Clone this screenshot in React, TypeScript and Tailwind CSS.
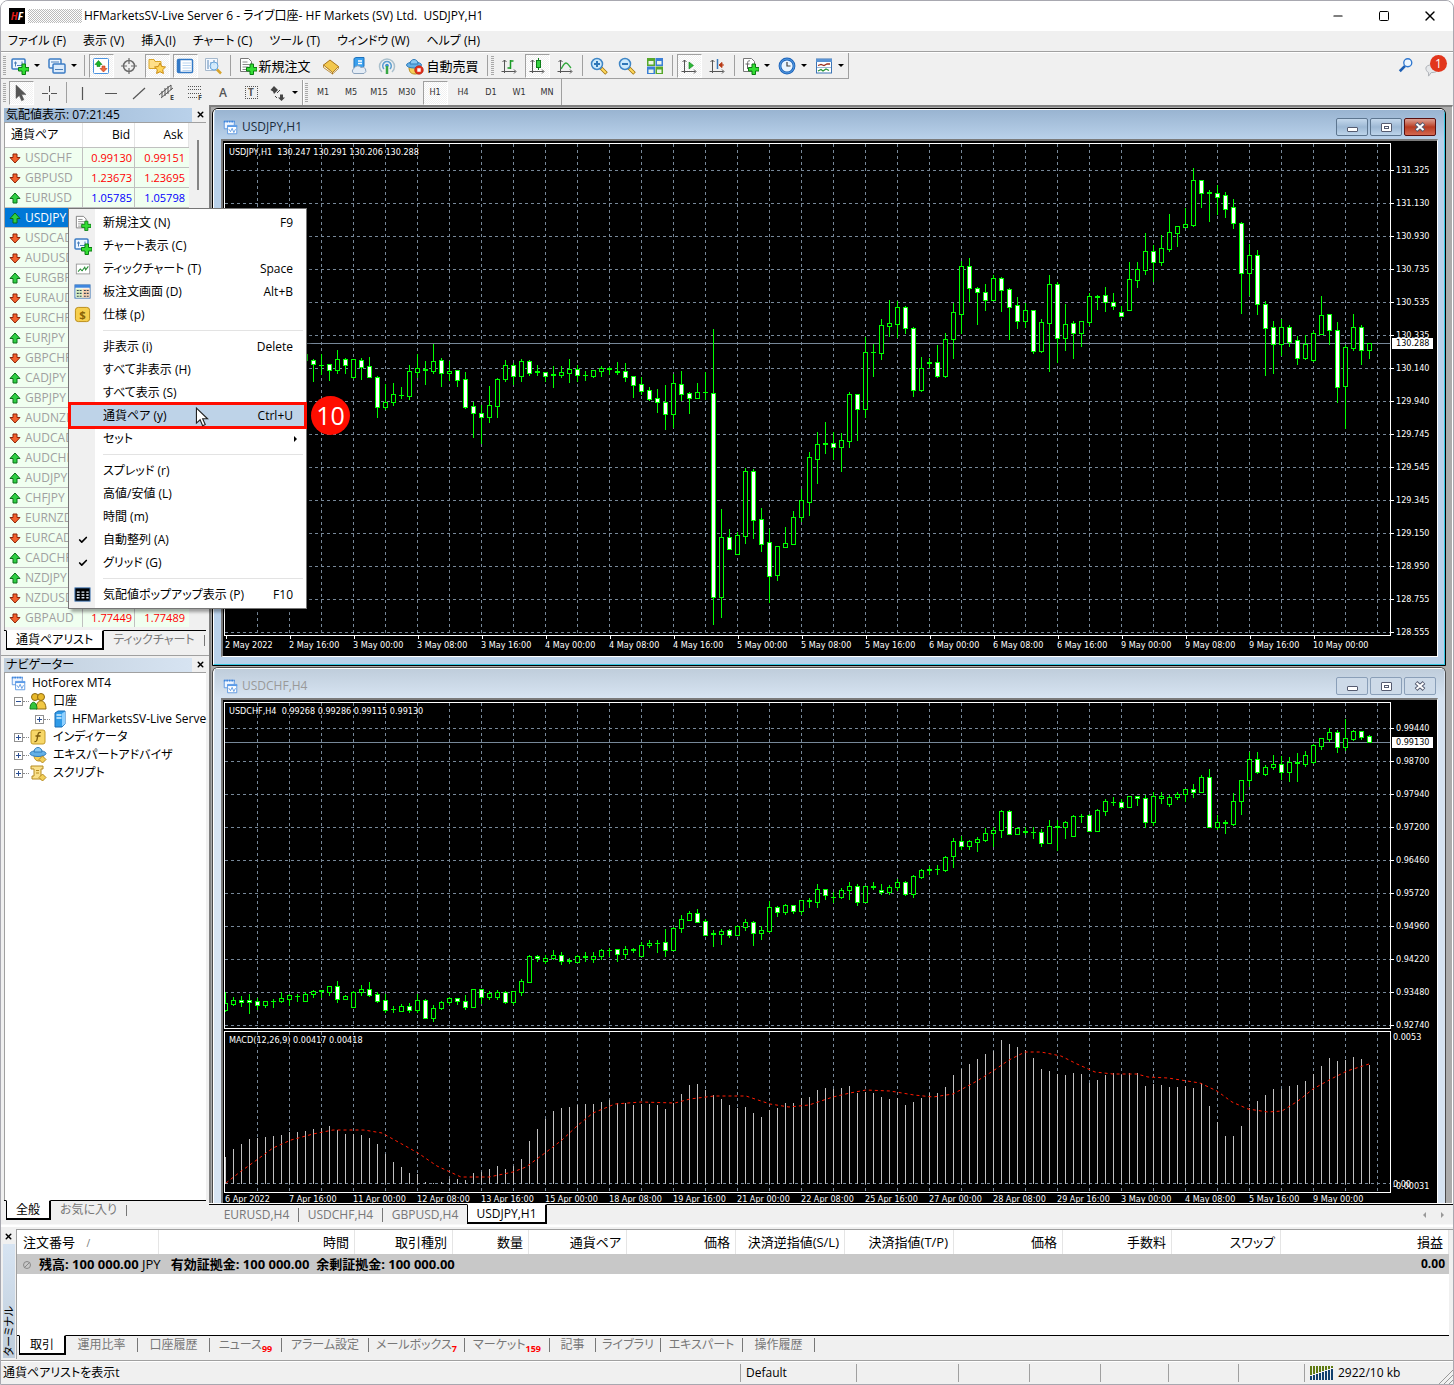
import type { ReactNode } from "react";
import { Check, Minus, Square, X } from "lucide-react";

/* high, body top, body bottom, low, filled (bearish) */
type Candle = [number, number, number, number, 0 | 1];

const BAR_STEP = 8;

const usdjpy: Candle[] = [
  [353, 354, 360, 364, 0], [359, 360, 364, 381, 1], [354, 365, 365, 374, 0], [364, 364, 370, 380, 1],
  [350, 359, 370, 373, 0], [358, 359, 365, 373, 1], [359, 359, 377, 378, 0], [358, 360, 367, 379, 1],
  [357, 366, 377, 377, 1], [376, 377, 407, 417, 1], [384, 402, 407, 409, 0], [383, 394, 402, 405, 0],
  [387, 395, 395, 398, 0], [365, 371, 396, 399, 0], [354, 368, 372, 377, 0], [361, 369, 370, 384, 0],
  [344, 361, 371, 373, 0], [358, 360, 373, 386, 1], [361, 371, 373, 380, 0], [370, 370, 380, 386, 1],
  [372, 379, 407, 408, 1], [402, 406, 413, 437, 1], [405, 413, 417, 443, 1], [386, 405, 417, 422, 0],
  [378, 379, 406, 417, 0], [360, 365, 379, 381, 0], [363, 365, 376, 384, 1], [359, 361, 376, 381, 0],
  [360, 361, 373, 375, 1], [365, 371, 372, 375, 0], [372, 372, 376, 381, 1], [366, 374, 375, 387, 0],
  [366, 372, 375, 377, 0], [359, 369, 373, 382, 0], [365, 369, 375, 381, 1], [371, 375, 375, 380, 0],
  [370, 370, 376, 377, 0], [366, 368, 371, 376, 0], [367, 368, 369, 374, 0], [362, 371, 372, 374, 0],
  [363, 371, 377, 381, 1], [376, 376, 385, 397, 1], [377, 384, 391, 394, 1], [387, 390, 399, 400, 1],
  [389, 398, 402, 412, 1], [385, 402, 414, 429, 1], [374, 383, 414, 427, 0], [371, 384, 394, 400, 1],
  [392, 393, 398, 413, 1], [383, 392, 398, 398, 0], [372, 392, 392, 399, 0], [329, 393, 597, 624, 1],
  [509, 537, 597, 617, 0], [529, 537, 549, 549, 1], [532, 535, 554, 554, 0], [468, 471, 536, 543, 0],
  [469, 471, 520, 538, 1], [508, 519, 544, 551, 1], [529, 542, 576, 602, 1], [546, 546, 575, 580, 0],
  [527, 543, 547, 547, 0], [511, 517, 544, 544, 0], [489, 500, 517, 521, 0], [452, 457, 502, 515, 0],
  [432, 444, 459, 483, 0], [422, 443, 444, 453, 0], [432, 443, 447, 459, 1], [433, 440, 447, 471, 0],
  [392, 394, 441, 447, 0], [394, 394, 409, 440, 1], [337, 352, 409, 417, 0], [344, 352, 352, 376, 0],
  [319, 325, 353, 359, 0], [300, 323, 326, 336, 0], [301, 307, 324, 337, 0], [306, 307, 328, 333, 1],
  [327, 328, 390, 396, 1], [357, 368, 390, 391, 0], [358, 362, 363, 367, 0], [345, 362, 376, 377, 1],
  [333, 339, 376, 377, 0], [303, 312, 339, 358, 0], [261, 266, 314, 333, 0], [258, 266, 288, 301, 1],
  [287, 288, 292, 324, 1], [284, 292, 300, 310, 1], [275, 278, 300, 300, 0], [277, 278, 290, 311, 1],
  [288, 289, 307, 339, 1], [297, 305, 321, 328, 1], [303, 310, 321, 327, 0], [310, 310, 351, 353, 1],
  [319, 322, 351, 352, 0], [275, 284, 323, 371, 0], [282, 284, 338, 362, 1], [304, 324, 338, 350, 0],
  [321, 323, 333, 358, 1], [321, 321, 333, 346, 0], [293, 296, 322, 325, 0], [295, 296, 297, 309, 0],
  [287, 295, 302, 311, 1], [293, 302, 306, 309, 1], [306, 312, 316, 316, 1], [262, 279, 310, 310, 0],
  [262, 269, 280, 287, 0], [233, 251, 270, 274, 0], [245, 251, 262, 281, 1], [235, 248, 262, 265, 0],
  [214, 232, 249, 251, 0], [226, 226, 233, 246, 0], [208, 224, 227, 227, 0], [168, 180, 225, 226, 0],
  [180, 180, 193, 207, 1], [190, 192, 193, 221, 0], [185, 193, 197, 214, 1], [192, 195, 209, 217, 1],
  [199, 207, 223, 228, 1], [222, 223, 273, 313, 1], [244, 255, 273, 295, 0], [250, 255, 304, 314, 1],
  [301, 304, 328, 375, 1], [321, 327, 344, 373, 1], [319, 327, 344, 355, 0], [325, 327, 342, 346, 1],
  [336, 340, 358, 364, 1], [335, 344, 358, 359, 0], [331, 333, 360, 361, 0], [296, 315, 334, 334, 0],
  [314, 314, 330, 344, 1], [322, 330, 387, 402, 1], [345, 347, 386, 428, 0], [314, 327, 348, 350, 0],
  [325, 327, 350, 364, 1], [343, 343, 350, 358, 0],
];

const usdchf: Candle[] = [
  [992, 1003, 1010, 1011, 0], [997, 1000, 1004, 1005, 0], [996, 1000, 1002, 1006, 1], [994, 1000, 1002, 1013, 1],
  [998, 1001, 1005, 1009, 1], [1001, 1001, 1005, 1007, 0], [999, 1001, 1001, 1007, 0], [992, 998, 1001, 1002, 0],
  [994, 995, 999, 1005, 0], [994, 996, 996, 1001, 0], [992, 994, 1001, 1001, 0], [990, 991, 994, 997, 0],
  [990, 990, 991, 997, 0], [986, 986, 992, 995, 0], [981, 986, 999, 1002, 1], [995, 996, 999, 999, 0],
  [991, 992, 1007, 1007, 0], [985, 989, 992, 995, 0], [982, 989, 995, 996, 1], [992, 994, 1001, 1002, 1],
  [994, 1000, 1010, 1012, 1], [1006, 1009, 1009, 1012, 0], [1004, 1006, 1011, 1011, 0], [1003, 1006, 1010, 1012, 1],
  [994, 1000, 1010, 1012, 0], [999, 1000, 1018, 1018, 1], [1005, 1008, 1018, 1021, 0], [1001, 1002, 1008, 1009, 0],
  [997, 998, 1002, 1004, 0], [998, 998, 1001, 1004, 1], [995, 1001, 1007, 1009, 1], [989, 989, 1007, 1007, 0],
  [989, 989, 997, 1003, 1], [991, 993, 997, 999, 0], [990, 992, 997, 999, 0], [991, 992, 1002, 1003, 1],
  [991, 991, 1002, 1004, 0], [979, 981, 992, 995, 0], [955, 956, 982, 982, 0], [955, 956, 958, 961, 1],
  [955, 958, 961, 963, 0], [950, 955, 958, 959, 0], [952, 955, 961, 964, 1], [958, 960, 961, 963, 0],
  [955, 956, 962, 962, 0], [952, 956, 957, 961, 0], [952, 956, 959, 962, 0], [949, 950, 956, 959, 0],
  [948, 950, 950, 956, 0], [949, 949, 954, 961, 1], [946, 949, 954, 958, 0], [948, 949, 950, 952, 0],
  [942, 945, 956, 956, 0], [940, 943, 945, 947, 0], [940, 943, 943, 952, 0], [929, 942, 950, 956, 1],
  [927, 928, 950, 950, 0], [915, 919, 928, 932, 0], [911, 913, 920, 920, 0], [909, 913, 922, 922, 1],
  [919, 921, 935, 935, 1], [930, 933, 934, 946, 0], [929, 931, 934, 944, 0], [929, 930, 935, 937, 1],
  [926, 926, 935, 935, 0], [919, 922, 927, 930, 0], [921, 922, 933, 945, 1], [926, 930, 933, 939, 0],
  [901, 907, 931, 932, 0], [906, 907, 912, 916, 1], [904, 905, 912, 914, 0], [905, 905, 911, 913, 1],
  [900, 900, 911, 914, 0], [898, 900, 901, 907, 0], [884, 889, 902, 907, 0], [889, 889, 895, 899, 1],
  [892, 897, 897, 902, 0], [888, 890, 897, 898, 0], [882, 886, 890, 899, 0], [884, 886, 902, 905, 1],
  [886, 886, 902, 902, 0], [882, 886, 887, 889, 0], [884, 890, 892, 894, 1], [885, 887, 892, 894, 0],
  [879, 882, 887, 890, 0], [881, 882, 894, 895, 1], [875, 876, 894, 897, 0], [869, 870, 877, 878, 0],
  [866, 869, 870, 874, 0], [865, 869, 869, 874, 0], [856, 857, 870, 871, 0], [838, 841, 856, 867, 0],
  [836, 841, 846, 849, 1], [840, 841, 846, 849, 0], [837, 839, 842, 851, 0], [828, 833, 840, 841, 0],
  [827, 830, 833, 846, 0], [810, 811, 830, 837, 0], [810, 811, 834, 834, 1], [827, 828, 834, 834, 0],
  [827, 831, 832, 834, 0], [827, 832, 832, 838, 0], [829, 832, 843, 846, 1], [820, 826, 843, 843, 0],
  [820, 826, 827, 850, 0], [821, 822, 827, 838, 0], [815, 816, 836, 836, 0], [814, 816, 816, 822, 0],
  [814, 815, 831, 831, 1], [809, 810, 831, 831, 0], [799, 801, 811, 815, 0], [797, 802, 802, 805, 0],
  [799, 802, 807, 808, 1], [796, 796, 807, 807, 0], [796, 796, 798, 805, 1], [795, 798, 822, 827, 1],
  [792, 796, 822, 825, 0], [792, 796, 798, 803, 0], [795, 797, 804, 806, 0], [792, 794, 797, 799, 0],
  [789, 789, 794, 801, 0], [784, 789, 792, 797, 1], [775, 777, 792, 792, 0], [769, 777, 827, 827, 1],
  [815, 822, 827, 829, 0], [820, 822, 823, 833, 0], [793, 801, 824, 825, 0], [780, 780, 801, 814, 0],
  [752, 759, 780, 786, 0], [752, 759, 772, 773, 1], [765, 767, 774, 775, 0], [755, 764, 767, 769, 0],
  [756, 764, 772, 779, 1], [757, 762, 772, 781, 0], [753, 762, 763, 781, 0], [751, 755, 764, 766, 0],
  [744, 745, 762, 763, 0], [738, 738, 746, 749, 0], [728, 732, 739, 741, 0], [730, 732, 747, 752, 1],
  [719, 738, 747, 750, 0], [730, 731, 739, 740, 0], [731, 731, 737, 739, 1], [735, 736, 742, 742, 1],
];

const macd = [
  1157, 1149, 1144, 1139, 1138, 1137, 1136, 1135, 1132, 1132, 1131, 1129, 1128, 1126, 1130, 1134, 1134, 1135, 1138,
  1144, 1154, 1162, 1167, 1173, 1174, 1182, 1183, 1182, 1179, 1179, 1180, 1173, 1172, 1169, 1166, 1169, 1166, 1159,
  1141, 1129, 1119, 1111, 1108, 1107, 1105, 1104, 1104, 1102, 1100, 1103, 1103, 1105, 1104, 1104, 1105, 1109, 1103,
  1094, 1085, 1084, 1090, 1095, 1099, 1105, 1108, 1107, 1113, 1117, 1110, 1108, 1103, 1103, 1098, 1097, 1090, 1088,
  1089, 1088, 1086, 1093, 1092, 1093, 1097, 1099, 1098, 1105, 1102, 1098, 1093, 1093, 1087, 1075, 1069, 1064, 1059,
  1054, 1051, 1040, 1044, 1047, 1050, 1058, 1069, 1071, 1074, 1075, 1073, 1074, 1083, 1080, 1075, 1073, 1075, 1073,
  1073, 1086, 1084, 1085, 1087, 1087, 1086, 1088, 1083, 1106, 1122, 1136, 1136, 1126, 1108, 1101, 1095, 1089, 1089,
  1086, 1085, 1081, 1074, 1066, 1058, 1061, 1060, 1057, 1059, 1065,
];

const signal =
  "1,1183 15,1172 33,1159 48,1148 66,1140 88,1134 108,1130 139,1130 157,1133 175,1143 193,1153 212,1166 236,1177 264,1177 288,1172 301,1167 320,1153 337,1140 352,1126 368,1113 390,1104 416,1102 450,1103 465,1099 489,1096 521,1096 545,1104 564,1107 584,1105 608,1097 625,1093 641,1090 665,1091 689,1095 708,1097 728,1094 752,1081 768,1071 784,1060 800,1052 816,1052 836,1056 852,1064 870,1072 888,1074 912,1074 923,1077 943,1078 975,1083 992,1091 1007,1102 1023,1109 1043,1112 1057,1111 1073,1101 1088,1089 1106,1079 1122,1071 1144,1064";

const jpyTimes = [
  "2 May 2022", "2 May 16:00", "3 May 00:00", "3 May 08:00", "3 May 16:00", "4 May 00:00", "4 May 08:00",
  "4 May 16:00", "5 May 00:00", "5 May 08:00", "5 May 16:00", "6 May 00:00", "6 May 08:00", "6 May 16:00",
  "9 May 00:00", "9 May 08:00", "9 May 16:00", "10 May 00:00",
];
const chfTimes = [
  "6 Apr 2022", "7 Apr 16:00", "11 Apr 00:00", "12 Apr 08:00", "13 Apr 16:00", "15 Apr 00:00", "18 Apr 08:00",
  "19 Apr 16:00", "21 Apr 00:00", "22 Apr 08:00", "25 Apr 16:00", "27 Apr 00:00", "28 Apr 08:00", "29 Apr 16:00",
  "3 May 00:00", "4 May 08:00", "5 May 16:00", "9 May 00:00",
];
const jpyPrices = [
  "131.325", "131.130", "130.930", "130.735", "130.535", "130.335", "130.140", "129.940", "129.745", "129.545",
  "129.345", "129.150", "128.950", "128.755", "128.555",
];
const chfPrices = [
  "0.99440", "0.98700", "0.97940", "0.97200", "0.96460", "0.95720", "0.94960", "0.94220", "0.93480", "0.92740",
];

type Quote = { symbol: string; up: boolean; bid?: string; ask?: string; selected?: boolean };

const quotes: Quote[] = [
  { symbol: "USDCHF", up: false, bid: "0.99130", ask: "0.99151" },
  { symbol: "GBPUSD", up: false, bid: "1.23673", ask: "1.23695" },
  { symbol: "EURUSD", up: true, bid: "1.05785", ask: "1.05798" },
  { symbol: "USDJPY", up: true, selected: true },
  { symbol: "USDCAD", up: false },
  { symbol: "AUDUSD", up: false },
  { symbol: "EURGBP", up: true },
  { symbol: "EURAUD", up: false },
  { symbol: "EURCHF", up: false },
  { symbol: "EURJPY", up: true },
  { symbol: "GBPCHF", up: false },
  { symbol: "CADJPY", up: true },
  { symbol: "GBPJPY", up: true },
  { symbol: "AUDNZD", up: false },
  { symbol: "AUDCAD", up: false },
  { symbol: "AUDCHF", up: true },
  { symbol: "AUDJPY", up: true },
  { symbol: "CHFJPY", up: true },
  { symbol: "EURNZD", up: false },
  { symbol: "EURCAD", up: false },
  { symbol: "CADCHF", up: true },
  { symbol: "NZDJPY", up: true },
  { symbol: "NZDUSD", up: false },
  { symbol: "GBPAUD", up: false, bid: "1.77449", ask: "1.77489" },
];

/* ─── Icons ─── */

function Icon({ children, className = "size-[18px]" }: { children: ReactNode; className?: string }) {
  return (
    <svg viewBox="0 0 18 18" className={`shrink-0 ${className}`} aria-hidden>
      {children}
    </svg>
  );
}

const Plus = () => (
  <path d="M11 7h3.500v3.500H18V14h-3.500v3.500H11V14H7.500v-3.500H11z" fill="#33dd33" stroke="#0a7d12" />
);

const NewChartIcon = () => (
  <Icon>
    <rect x="1" y="2" width="13" height="10" rx="1" fill="#eef6ff" stroke="#3c7cc4" strokeWidth="1.500" />
    <path d="M4.500 4.500v5M3 6h3M6 8.500h5M11 4.500v5" stroke="#4b7fb8" fill="none" />
    <Plus />
  </Icon>
);
const ProfilesIcon = () => (
  <Icon>
    <rect x="1" y="2" width="12" height="9" rx="1" fill="#eef6ff" stroke="#3c7cc4" strokeWidth="1.500" />
    <path d="M3 5h8" stroke="#4b7fb8" />
    <rect x="5" y="7" width="12" height="9" rx="1" fill="#dcebfb" stroke="#3c7cc4" strokeWidth="1.500" />
    <path d="M7 12.500h8" stroke="#4b7fb8" />
  </Icon>
);
const WindowsIcon = ({ className }: { className?: string }) => (
  <Icon className={className}>
    <path d="M1.500 1.500h12v9h-12z" fill="#eef5ff" stroke="#4f8fdf" />
    <path d="M1 2h13" stroke="#3f86dd" strokeWidth="2" strokeDasharray="2 1" />
    <path d="M5.500 6.500h11v10h-11z" fill="#fff" stroke="#4f8fdf" />
    <path d="M5 7.500h12" stroke="#5b9be8" strokeWidth="2" />
    <path d="M7 11l2 3 2-4 2 5 2-4" stroke="#4f8fdf" fill="none" />
  </Icon>
);
const MarketWatchIcon = () => (
  <Icon>
    <rect x="1.500" y="1.500" width="15" height="15" rx="1" fill="#fff" stroke="#4b93e0" />
    <path d="M6.500 3.500l3.500 4H8v2H5v-2H3z" fill="#19b52a" stroke="#0d7d18" strokeWidth=".6" />
    <path d="M11.500 15L8 11.500h2V9h3v2.500h2z" fill="#f06a3d" stroke="#b83a15" strokeWidth=".6" />
  </Icon>
);
const TargetIcon = () => (
  <Icon>
    <circle cx="9" cy="9" r="5.500" fill="none" stroke="#6b6b6b" strokeWidth="1.500" />
    <path d="M9 1v6M9 11v6M1 9h6M11 9h6" stroke="#6b6b6b" strokeWidth="1.200" />
  </Icon>
);
const FolderStarIcon = () => (
  <Icon>
    <path d="M1 2.500h5l1 2h6v7H1z" fill="#ffe08a" stroke="#d8a52a" />
    <path
      d="M12 6l1.700 3.500 3.800.5-2.800 2.700.7 3.800L12 14.700 8.600 16.500l.7-3.800L6.500 10l3.800-.5z"
      fill="#ffd65a"
      stroke="#c98a12"
    />
  </Icon>
);
const DataWindowIcon = () => (
  <Icon>
    <rect x="1.500" y="2.500" width="15" height="13" rx="1" fill="#fff" stroke="#3379c6" strokeWidth="1.500" />
    <path d="M2 3h2.500v12H2z" fill="#3379c6" />
    <path d="M6.500 6h8.500M6.500 8.500h8.500M6.500 11h8.500M6.500 13.500h8.500" stroke="#b9d4f0" />
  </Icon>
);
const TesterIcon = () => (
  <Icon>
    <path d="M1.500 1.500h12v12h-12z" fill="#f5f9ff" stroke="#a5b8cc" />
    <path d="M4 3v9M7 5v6M10 3v5" stroke="#5d88b5" />
    <circle cx="10" cy="9" r="4" fill="#cfeafd" fillOpacity=".85" stroke="#69a6dc" />
    <path d="M13 12.500l4 4" stroke="#d7a32b" strokeWidth="2.500" />
  </Icon>
);
const OrderIcon = ({ className }: { className?: string }) => (
  <Icon className={className}>
    <path d="M1.500 1.500h8l3 3v10h-11z" fill="#fff" stroke="#777" />
    <path d="M3.500 5h5M3.500 7.500h7M3.500 10h6M3.500 12.500h4" stroke="#888" />
    <Plus />
  </Icon>
);
const BookIcon = () => (
  <Icon>
    <path d="M1.500 8L8 3l8.500 6.500-6 6z" fill="#f3c84e" stroke="#a8741a" />
    <path d="M1.500 8v2.500l9 6.500v-1.500zM16.500 9.500v2l-6 5.500v-1.500z" fill="#fff6d6" stroke="#a8741a" strokeWidth=".8" />
  </Icon>
);
const HostingIcon = () => (
  <Icon>
    <path d="M4 1.500l2-1h8v9l-2 1.500H4z" fill="#3aa0ee" stroke="#1e72bd" />
    <path d="M8 4h4M8 6.500h4" stroke="#fff" strokeWidth="1.500" />
    <path d="M4 16.500a2.700 2.700 0 010-5 4 4 0 017-1 3.200 3.200 0 013 6z" fill="#e4ecf5" stroke="#8ba3bd" />
  </Icon>
);
const SignalIcon = () => (
  <Icon>
    <path d="M4 15a7.500 7.500 0 1110 0" fill="none" stroke="#a9bfcc" strokeWidth="1.500" />
    <path d="M6 12a4.300 4.300 0 116 0" fill="none" stroke="#5d9fd0" strokeWidth="1.500" />
    <circle cx="9" cy="8.500" r="1.800" fill="#3b8fd0" />
    <path d="M9 9v8" stroke="#39a845" strokeWidth="2.500" />
  </Icon>
);
const AutoTradeIcon = () => (
  <Icon>
    <path d="M3 10c0 5 2 7 6 7s6-2 6-7z" fill="#f5cf58" stroke="#b58a20" />
    <ellipse cx="8" cy="8" rx="7.500" ry="3" fill="#64b0e6" stroke="#2f7cbc" />
    <path d="M4 7c0-6 8-6 8 0z" fill="#8ccaf2" stroke="#2f7cbc" />
    <circle cx="13" cy="13" r="4.300" fill="#e2311d" stroke="#a81d0d" strokeWidth=".6" />
    <path d="M11.300 11.300h3.400v3.400h-3.400z" fill="#fff" />
  </Icon>
);
const Axes = () => <path d="M4.500 3v13M1.500 14.500h14M2.500 5l2-2 2 2M14 12.500l2 2-2 2" stroke="#555" fill="none" />;
const BarsIcon = () => (
  <Icon>
    <Axes />
    <path d="M10.500 3v9M10.500 4h3M7.500 11h3" stroke="#1a9b25" strokeWidth="1.500" />
  </Icon>
);
const CandleIcon = () => (
  <Icon>
    <Axes />
    <path d="M10.500 1v12" stroke="#0d7d18" />
    <rect x="8.500" y="3.500" width="4" height="7" fill="#35d13f" stroke="#0d7d18" />
  </Icon>
);
const LineIcon = () => (
  <Icon>
    <Axes />
    <path d="M5 12c2-3 3-6 5-6s3 3 5 5" stroke="#32a83c" strokeWidth="1.300" fill="none" />
  </Icon>
);
function ZoomIcon({ plus }: { plus?: boolean }) {
  return (
    <Icon>
      <path d="M11 11l5.500 5.500" stroke="#a0740f" strokeWidth="3.500" />
      <path d="M11.500 11.500l4.500 4.500" stroke="#ffd95e" strokeWidth="2" />
      <circle cx="7" cy="7" r="5.500" fill="#cdeafb" stroke="#3f86c6" strokeWidth="1.500" />
      <path d={plus ? "M4 7h6M7 4v6" : "M4 7h6"} stroke="#2f77b8" strokeWidth="2" />
    </Icon>
  );
}
const TileIcon = () => (
  <Icon>
    <path d="M1 1h8v8H1zM9.500 9.500h7.500V17H9.500z" fill="#57a82c" />
    <path d="M9.500 1H17v8H9.500zM1 9.500h8V17H1z" fill="#3b7fd6" />
    <path d="M2.500 4h5v3.500h-5zM11 4h4.500v3.500H11zM2.500 12.500h5V16h-5zM11 12.500h4.500V16H11z" fill="#eef6e8" />
  </Icon>
);
const AutoScrollIcon = () => (
  <Icon>
    <Axes />
    <path d="M9 5l4.500 3.500L9 12z" fill="#2cba38" stroke="#0d7d18" strokeWidth=".6" />
  </Icon>
);
const ShiftIcon = () => (
  <Icon>
    <Axes />
    <path d="M9.500 2v10" stroke="#3a78b8" strokeWidth="1.500" />
    <path d="M11 8l3-2.500v5zM13 8h3" fill="#b83a15" stroke="#b83a15" />
  </Icon>
);
const IndicatorIcon = () => (
  <Icon>
    <path d="M2.500 1.500h8l3 3v10h-11z" fill="#fff" stroke="#777" />
    <path d="M9 4c-2-1-2.500 1-2.500 3v5M4.500 7h4" stroke="#666" fill="none" />
    <Plus />
  </Icon>
);
const ClockIcon = () => (
  <Icon>
    <circle cx="9" cy="9" r="7" fill="#e9f5ff" stroke="#1c62b8" strokeWidth="2.800" />
    <circle cx="9" cy="9" r="7" fill="none" stroke="#66aef0" strokeWidth=".8" />
    <path d="M9 5V9h3.500" stroke="#444" strokeWidth="1.200" fill="none" />
  </Icon>
);
const TemplateIcon = () => (
  <Icon>
    <rect x="1.500" y="2" width="15" height="14" fill="#fff" stroke="#3c74b4" />
    <path d="M1 3.500h16" stroke="#5a93d3" strokeWidth="3" />
    <path d="M3 8.500l3-1 3 1 3-1.500h3" stroke="#9c3020" strokeWidth="1.300" fill="none" />
    <path d="M2 10.500h14" stroke="#9bb7d6" />
    <path d="M3 14l3-1.500 2 1.500 3-2 3 1.500" stroke="#269336" strokeWidth="1.300" fill="none" />
  </Icon>
);
const PointerIcon = ({ className, light }: { className?: string; light?: boolean }) => (
  <Icon className={className}>
    <path
      d="M4 1v13.500l3.300-3 2.300 5.300 2.300-1-2.300-5.200H14z"
      fill={light ? "#fff" : "#555"}
      stroke={light ? "#222" : "#555"}
      strokeWidth={light ? "1" : ".5"}
    />
  </Icon>
);
const CrossIcon = () => (
  <Icon>
    <path d="M9.500 2v6M9.500 11v6M2 9.500h6M11 9.500h6" stroke="#555" />
  </Icon>
);
const stroked = (d: string) => (
  <Icon>
    <path d={d} stroke="#555" strokeWidth="1.200" fill="none" />
  </Icon>
);
const ChannelIcon = () => (
  <Icon>
    <path d="M1 11L13 1M3 14L15 4M4 7v6M7 4v8M10 2v8M13 1v5" stroke="#555" />
    <text x="12" y="16" className="fill-[#444] text-[7px] font-bold">E</text>
  </Icon>
);
const FiboIcon = () => (
  <Icon>
    <path d="M2 2.500h13M2 5.500h13M2 9.500h13M2 13.500h9" stroke="#555" strokeDasharray="1 1" />
    <text x="12" y="16" className="fill-[#444] text-[7px] font-bold">F</text>
  </Icon>
);
const ArrowsIcon = () => (
  <Icon>
    <path d="M5 2l4 4-4 4-1-2.500L1.500 6zM12.500 17L9 13.500h2v-3h3v3h2z" fill="#444" />
    <path d="M8 9l3-3M6 12l2 2" stroke="#444" />
  </Icon>
);

function QuoteArrow({ up }: { up: boolean }) {
  return (
    <svg viewBox="0 0 12 12" className="size-3 shrink-0" aria-hidden>
      {up ? (
        <path d="M6 1l5 5.500H8V11H4V6.500H1z" fill="#2fd044" stroke="#0b6e18" strokeWidth="1" />
      ) : (
        <path d="M6 11L1 5.500h3V2h4v3.500h3z" fill="#f4622c" stroke="#8d2408" strokeWidth="1" />
      )}
    </svg>
  );
}

/* ─── Toolbars ─── */

const Grip = () => (
  <span className="mx-px h-[19px] w-[3px] self-center bg-[repeating-linear-gradient(#a8a8a8_0_1px,#f0f0f0_1px_2px)]" />
);
const Sep = () => (
  <span className="flex w-[6px] justify-center py-[2px]">
    <span className="w-px bg-[#a0a0a0]" />
  </span>
);
const Caret = () => (
  <span className="size-0 border-x-3 border-t-3 border-x-transparent border-t-black" />
);

function Tool({
  label,
  children,
  pressed,
  menu,
}: {
  label: string;
  children: ReactNode;
  pressed?: boolean;
  menu?: boolean;
}) {
  return (
    <button
      aria-label={label}
      aria-pressed={pressed}
      className={`flex h-full items-center justify-center ${menu ? "w-[37px] gap-[5px]" : "w-7"}`}
    >
      <span
        className={`flex items-center justify-center ${
          pressed
            ? "h-6 w-[25px] border border-b-white border-l-[#a0a0a0] border-r-white border-t-[#a0a0a0] bg-[conic-gradient(#fff_25%,#f0f0f0_0_50%,#fff_0_75%,#f0f0f0_0)] bg-[length:2px_2px]"
            : ""
        }`}
      >
        {children}
      </span>
      {menu && <Caret />}
    </button>
  );
}

function MainToolbar() {
  return (
    <div className="flex h-[26px] items-stretch self-start border-b border-r border-[#a0a0a0] pl-px">
      <Grip />
      <Tool label="New chart" menu><NewChartIcon /></Tool>
      <Tool label="Profiles" menu><ProfilesIcon /></Tool>
      <Sep />
      <Tool label="Market watch" pressed><MarketWatchIcon /></Tool>
      <Tool label="Crosshair"><TargetIcon /></Tool>
      <Tool label="Navigator" pressed><FolderStarIcon /></Tool>
      <Tool label="Terminal" pressed><DataWindowIcon /></Tool>
      <Tool label="Tester"><TesterIcon /></Tool>
      <Sep />
      <button className="flex w-[84px] items-center justify-center gap-px whitespace-nowrap text-[13px] leading-5">
        <OrderIcon />
        新規注文
      </button>
      <Tool label="MetaEditor"><BookIcon /></Tool>
      <Tool label="Hosting"><HostingIcon /></Tool>
      <Tool label="Signals"><SignalIcon /></Tool>
      <button className="flex w-[83px] items-center justify-center gap-[2px] whitespace-nowrap text-[13px] leading-5">
        <AutoTradeIcon />
        自動売買
      </button>
      <Sep />
      <Grip />
      <Tool label="Bars"><BarsIcon /></Tool>
      <Tool label="Candles" pressed><CandleIcon /></Tool>
      <Tool label="Line"><LineIcon /></Tool>
      <Sep />
      <Tool label="Zoom in"><ZoomIcon plus /></Tool>
      <Tool label="Zoom out"><ZoomIcon /></Tool>
      <Tool label="Tile"><TileIcon /></Tool>
      <Sep />
      <Tool label="Auto scroll" pressed><AutoScrollIcon /></Tool>
      <Tool label="Chart shift"><ShiftIcon /></Tool>
      <Sep />
      <Tool label="Indicators" menu><IndicatorIcon /></Tool>
      <Tool label="Periods" menu><ClockIcon /></Tool>
      <Tool label="Templates" menu><TemplateIcon /></Tool>
    </div>
  );
}

function DrawToolbar() {
  return (
    <div className="flex h-[26px] items-stretch self-start border-r border-[#a0a0a0] pl-px pt-px">
      <Grip />
      <Tool label="Cursor" pressed><PointerIcon /></Tool>
      <Tool label="Cross"><CrossIcon /></Tool>
      <Sep />
      <Tool label="Vertical line">{stroked("M8.500 3v13")}</Tool>
      <Tool label="Horizontal line">{stroked("M3 9.500h12")}</Tool>
      <Tool label="Trend line">{stroked("M3 15L15 4")}</Tool>
      <Tool label="Channel"><ChannelIcon /></Tool>
      <Tool label="Fibonacci"><FiboIcon /></Tool>
      <Tool label="Text"><span className="text-[12px] font-semibold text-[#555]">A</span></Tool>
      <Tool label="Label">
        <span className="flex size-[13px] items-center justify-center border border-dotted border-[#555] text-[10px] font-bold text-[#555]">
          T
        </span>
      </Tool>
      <Tool label="Arrows" menu><ArrowsIcon /></Tool>
      <span className="w-px bg-[#a0a0a0]" />
      <span className="w-px bg-white" />
      <Grip />
      {["M1", "M5", "M15", "M30", "H1", "H4", "D1", "W1", "MN"].map((tf) => (
        <Tool key={tf} label={tf} pressed={tf === "H1"}>
          <span className="font-[DejaVu_Sans_Condensed,DejaVu_Sans,sans-serif] text-[9px] text-[#333]">{tf}</span>
        </Tool>
      ))}
    </div>
  );
}

/* ─── Charts ─── */

function Grid({ top, height, rows }: { top: number; height: number; rows: number[] }) {
  return (
    <g stroke="#778899" strokeDasharray="3 3" shapeRendering="crispEdges">
      {Array.from({ length: 36 }, (_, i) => (
        <line key={i} x1={32.5 + i * 32} x2={32.5 + i * 32} y1={top} y2={top + height} />
      ))}
      {rows.map((y) => (
        <line key={y} x1="0" x2="100%" y1={y + 0.5} y2={y + 0.5} />
      ))}
    </g>
  );
}

function Candles({ data, skip = 0 }: { data: Candle[]; skip?: number }) {
  return (
    <g shapeRendering="crispEdges">
      {data.map(([high, top, bottom, low, filled], i) => {
        const x = (i + skip) * BAR_STEP;
        return (
          <g key={i}>
            <rect x={x} y={high} width="1" height={low - high + 1} fill="#00ff00" />
            <rect x={x - 2} y={top} width="5" height={bottom - top + 1} fill="#00ff00" />
            {bottom - top > 1 && (
              <rect x={x - 1} y={top + 1} width="3" height={bottom - top - 1} fill={filled ? "#ffffff" : "#000000"} />
            )}
          </g>
        );
      })}
    </g>
  );
}

function PriceAxis({ prices, tag, tagClass }: { prices: string[]; tag: string; tagClass: string }) {
  return (
    <>
      {prices.map((p) => (
        <div key={p} className="flex h-[33px] items-center gap-[2px]">
          <span className="h-px w-[3px] bg-white" />
          {p}
        </div>
      ))}
      <span className={`absolute left-px flex h-[11px] w-[41px] items-center bg-white pl-1 text-black ${tagClass}`}>
        {tag}
      </span>
    </>
  );
}

function TimeAxis({ labels, className }: { labels: string[]; className: string }) {
  return (
    <div className={`flex overflow-hidden ${className}`}>
      {labels.map((t) => (
        <div key={t} className="flex w-16 shrink-0 flex-col whitespace-nowrap">
          <span className="ml-[2px] h-[3px] w-px bg-white" />
          <span className="pl-px leading-3">{t}</span>
        </div>
      ))}
    </div>
  );
}

function ChartWindow({ title, active, children }: { title: string; active?: boolean; children: ReactNode }) {
  const caption = active
    ? "border-[#5d7690] bg-linear-to-b from-[#c4d8ec] via-[#9db8d4] to-[#bdd4ea]"
    : "border-[#8a9fb8] bg-[#cddae8]";
  return (
    <section
      className={`rounded-t-md border ${active ? "border-black" : "mt-px border-b-0 border-[#4a4a4a]"}`}
      aria-label={title}
    >
      <div
        className={`rounded-t-[5px] border border-l-white border-t-white pl-[7px] pr-[6px] ${
          active
            ? "border-b-[#34c5e0] border-r-[#34c5e0] bg-[#b9d1ea] pb-[7px]"
            : "border-b-0 border-r-[#d7e4f2] bg-[#d7e4f2]"
        }`}
      >
        <header
          className={`-mx-[6px] flex h-[29px] items-center px-2 pt-[5px] ${
            active
              ? "bg-linear-to-b from-[#99b4d1] to-[#b9d1ea] text-[#1c2c3c]"
              : "bg-linear-to-b from-[#bfcddb] to-[#d7e4f2] text-[#999]"
          }`}
        >
          <WindowsIcon className="size-[15px]" />
          <h2 className="ml-1 flex-1 text-[12px]">{title}</h2>
          <div className="flex gap-[2px]">
            <button aria-label="Minimize" className={`flex h-[18px] w-8 items-center justify-center rounded-[2px] border ${caption}`}>
              <span className="mt-1 h-[5px] w-[11px] rounded-[1px] border border-[#555b70] bg-white" />
            </button>
            <button aria-label="Maximize" className={`flex h-[18px] w-8 items-center justify-center rounded-[2px] border ${caption}`}>
              <span className="h-[9px] w-[11px] rounded-[1px] border border-[#555b70] bg-white p-[2px]">
                <span className="block h-full border border-[#555b70]" />
              </span>
            </button>
            <button
              aria-label="Close"
              className={`flex h-[18px] w-8 items-center justify-center rounded-[2px] border ${
                active ? "border-[#5a1010] bg-linear-to-b from-[#dba093] via-[#b83a20] to-[#d3674f]" : caption
              }`}
            >
              <svg viewBox="0 0 12 10" className="h-[10px] w-3" aria-hidden>
                <path d="M2 1.500l8 7M10 1.500l-8 7" stroke="#555b70" strokeWidth="4" />
                <path d="M2.500 2l7 6M9.500 2l-7 6" stroke="#fff" strokeWidth="2" />
              </svg>
            </button>
          </div>
        </header>
        <div
          className={`border-l-2 border-r border-t-2 border-l-[#7a7a7a] border-r-white border-t-[#7a7a7a] bg-black pl-px pt-[2px] font-[DejaVu_Sans_Condensed,DejaVu_Sans,sans-serif] text-[9px] text-white ${
            active ? "border-b border-b-white" : ""
          }`}
        >
          {children}
        </div>
      </div>
    </section>
  );
}

const jpyRows = jpyPrices.map((_, i) => 170 + i * 33);
const chfRows = chfPrices.map((_, i) => 728 + i * 33);

function UsdJpyChart() {
  return (
    <ChartWindow title="USDJPY,H1" active>
      <div className="flex h-[493px]">
        <div className="relative min-w-0 flex-1 border border-white">
          <svg className="block h-full w-full" role="img" aria-label="USDJPY,H1">
            <g transform="translate(0 -144)">
              <Grid top={144} height={491} rows={jpyRows} />
              <rect x="0" y="343" width="100%" height="1" fill="#778899" />
              <Candles data={usdjpy} skip={10} />
            </g>
          </svg>
          <p className="absolute left-1 top-[2px] whitespace-pre leading-3">
            {"USDJPY,H1  130.247 130.291 130.206 130.288"}
          </p>
        </div>
        <div className="relative w-[46px] pt-[11px]">
          <PriceAxis prices={jpyPrices} tag="130.288" tagClass="top-[195px]" />
        </div>
      </div>
      <TimeAxis labels={jpyTimes} className="h-5" />
    </ChartWindow>
  );
}

function UsdChfChart() {
  return (
    <ChartWindow title="USDCHF,H4">
      <div className="flex h-[327px]">
        <div className="relative min-w-0 flex-1 border border-white">
          <svg className="block h-full w-full" role="img" aria-label="USDCHF,H4">
            <g transform="translate(0 -703)">
              <Grid top={703} height={325} rows={chfRows} />
              <rect x="0" y="742" width="100%" height="1" fill="#778899" />
              <Candles data={usdchf} />
            </g>
          </svg>
          <p className="absolute left-1 top-[2px] whitespace-pre leading-3">
            {"USDCHF,H4  0.99268 0.99286 0.99115 0.99130"}
          </p>
        </div>
        <div className="relative w-[46px] pt-[10px]">
          <PriceAxis prices={chfPrices} tag="0.99130" tagClass="top-[35px]" />
        </div>
      </div>
      <div className="mt-[2px] flex h-[162px]">
        <div className="relative min-w-0 flex-1 border border-white">
          <svg className="block h-full w-full" role="img" aria-label="MACD">
            <g transform="translate(0 -1032)">
              <Grid top={1032} height={160} rows={[1183]} />
              <g fill="#c0c0c0" shapeRendering="crispEdges">
                {macd.map((y, i) => (
                  <rect key={i} x={i * BAR_STEP} y={y} width="1" height={1184 - y} />
                ))}
              </g>
              <polyline points={signal} fill="none" stroke="#ff1a00" strokeDasharray="3 3" />
            </g>
          </svg>
          <p className="absolute left-1 top-[2px] leading-3">MACD(12,26,9) 0.00417 0.00418</p>
        </div>
        <div className="flex w-[46px] flex-col justify-between pb-px pl-[2px]">
          <span className="leading-3">0.0053</span>
          <span className="relative leading-3">
            <span className="absolute bottom-[2px] left-0">0.00</span>
            -0.00031
          </span>
        </div>
      </div>
      <TimeAxis labels={chfTimes} className="h-[10px]" />
    </ChartWindow>
  );
}

/* ─── Left dock ─── */

function PanelTitle({ children, active }: { children: ReactNode; active?: boolean }) {
  return (
    <div className="flex h-[15px] items-center">
      <h2
        className={`ml-[3px] h-[14px] w-[188px] pl-[2px] text-[12px] leading-[14px] ${
          active ? "bg-linear-to-r from-[#99b4d1] to-[#b9d1ea]" : "bg-linear-to-r from-[#bfcddb] to-[#d7e4f2]"
        }`}
      >
        {children}
      </h2>
      <button aria-label="Close panel" className="ml-1">
        <X className="size-[9px]" strokeWidth={4} />
      </button>
    </div>
  );
}

function DockTabs({ active, other }: { active: string; other: string }) {
  return (
    <div className="mx-[3px] flex h-5 items-stretch border-t border-black text-[12px] leading-4">
      <button className="-mt-px ml-[2px] whitespace-nowrap border border-b-2 border-r-2 border-black border-t-white bg-white px-[9px]">
        {active}
      </button>
      <button className="mb-[3px] mt-px flex items-center whitespace-nowrap px-[9px] text-[#777]">{other}</button>
      <span className="my-1 w-px bg-[#777]" />
    </div>
  );
}

function MarketWatch() {
  return (
    <div className="flex h-[551px] flex-col border-b border-[#a0a0a0] pt-[2px]">
      <PanelTitle active>気配値表示: 07:21:45</PanelTitle>
      <div className="mx-[3px] flex h-[508px] border-l border-t border-[#a0a0a0] bg-[#f0f0f0]">
        <table className="h-fit w-[184px] table-fixed border-separate border-spacing-0 bg-[#f0fff0] text-[12px] leading-4">
          <colgroup>
            <col className="w-[78px]" />
            <col className="w-[52px]" />
            <col className="w-[54px]" />
          </colgroup>
          <thead>
            <tr className="h-6 bg-white">
              <th className="border-r border-[#e5e5e5] pl-[6px] text-left font-normal">通貨ペア</th>
              <th className="border-r border-[#e5e5e5] pr-1 text-right font-normal">Bid</th>
              <th className="border-r border-[#e5e5e5] pr-[5px] text-right font-normal">Ask</th>
            </tr>
          </thead>
          <tbody>
            {quotes.map((q) => (
              <tr key={q.symbol} className={`h-5 ${q.selected ? "bg-[#0078d7] text-white" : ""}`}>
                <td className={`border-r border-t border-[#c0c0c0] pl-1 ${q.selected ? "" : "text-[#a0a0a0]"}`}>
                  <span className="flex items-center gap-1">
                    <QuoteArrow up={q.up} />
                    {q.symbol}
                  </span>
                </td>
                <td className={`border-r border-t border-[#c0c0c0] pr-[2px] text-right text-[11px] ${q.up ? "text-[#0000ff]" : "text-[#ff0000]"}`}>
                  {q.bid}
                </td>
                <td className={`border-t border-[#c0c0c0] pr-1 text-right text-[11px] ${q.up ? "text-[#0000ff]" : "text-[#ff0000]"}`}>
                  {q.ask}
                </td>
              </tr>
            ))}
          </tbody>
        </table>
        <div className="flex flex-1 justify-center pt-[17px]">
          <span className="h-[50px] w-[2px] bg-[#858585]" />
        </div>
      </div>
      <DockTabs active="通貨ペアリスト" other="ティックチャート" />
    </div>
  );
}

function Expander({ open }: { open?: boolean }) {
  return (
    <span className="flex items-center">
      <svg viewBox="0 0 9 9" className="size-[9px]" aria-hidden>
        <rect x=".5" y=".5" width="8" height="8" fill="#fff" stroke="#919191" />
        <path d={open ? "M2 4.500h5" : "M2 4.500h5M4.500 2v5"} stroke="#2b4f94" />
      </svg>
      <span className="w-[6px] border-t border-dotted border-[#888]" />
    </span>
  );
}

const row = "flex h-[18px] items-center whitespace-nowrap";

function Navigator() {
  return (
    <div className="flex flex-1 flex-col pt-px">
      <PanelTitle>ナビゲーター</PanelTitle>
      <div className="mx-[3px] flex-1 border-l border-t border-[#a0a0a0] bg-white pt-px text-[12px] leading-4">
        <div className={`${row} gap-[6px] pl-[6px]`}>
          <WindowsIcon className="size-[15px]" />
          HotForex MT4
        </div>
        <div className={`${row} gap-[6px] pl-[9px]`}>
          <span className="flex items-center">
            <Expander open />
            <Icon>
              <circle cx="6" cy="5" r="3.500" fill="#e8b92c" stroke="#8f6a10" />
              <circle cx="12" cy="5" r="3.500" fill="#e8b92c" stroke="#8f6a10" />
              <path d="M7 17c0-11 10-11 10 0z" fill="#f1c845" stroke="#8f6a10" />
              <path d="M1 17c0-9 7-9 7 0z" fill="#35c43c" stroke="#157c1c" />
            </Icon>
          </span>
          口座
        </div>
        <div className={`${row} gap-1 pl-[30px]`}>
          <span className="flex items-center">
            <Expander />
            <Icon>
              <path d="M5 3l3-2h7v13l-3 3H5z" fill="#2f9be8" stroke="#1a6db5" />
              <path d="M6.500 5h5M6.500 8h5" stroke="#d7efff" strokeWidth="1.500" />
              <path d="M12 3.500L15 1.500v12.500l-3 2.500z" fill="#8fd0ff" />
            </Icon>
          </span>
          HFMarketsSV-Live Serve
        </div>
        <div className={`${row} gap-[6px] pl-[9px]`}>
          <span className="flex items-center">
            <Expander />
            <Icon>
              <rect x="2" y="2" width="14" height="14" rx="2" fill="#f7d768" stroke="#c39a25" />
              <path d="M12 4.500c-3-1-3 2-3.500 4.500S8 14 5.500 13.500M6.500 8h5" stroke="#7b5b0c" strokeWidth="1.300" fill="none" />
            </Icon>
          </span>
          インディケータ
        </div>
        <div className={`${row} gap-[6px] pl-[9px]`}>
          <span className="flex items-center">
            <Expander />
            <Icon>
              <path d="M5 9c0 4 2 6 5 6s4-2 4-6z" fill="#f5cf58" stroke="#b58a20" />
              <ellipse cx="9" cy="7.500" rx="8" ry="3" fill="#64b0e6" stroke="#2f7cbc" />
              <path d="M5 6c0-6 8-6 8 0z" fill="#8ccaf2" stroke="#2f7cbc" />
              <path d="M13.500 10l3.500 3.500-3.500 3.500-3.500-3.500z" fill="#f3cf58" stroke="#b58a20" />
            </Icon>
          </span>
          エキスパートアドバイザ
        </div>
        <div className={`${row} gap-[6px] pl-[9px]`}>
          <span className="flex items-center">
            <Expander />
            <Icon>
              <path d="M2 2h12v3h-2v7h2v3H3v-3h2V5H2z" fill="#f9e08a" stroke="#b58a20" />
              <path d="M7 6.500h3M7 9h3" stroke="#b58a20" />
              <path d="M13.500 10l3.500 3.500-3.500 3.500-3.500-3.500z" fill="#f3cf58" stroke="#b58a20" />
            </Icon>
          </span>
          スクリプト
        </div>
      </div>
      <DockTabs active="全般" other="お気に入り" />
      <div className="h-1" />
    </div>
  );
}

/* ─── Context menu ─── */

type MenuEntry =
  | "sep"
  | { label: string; keys?: string; icon?: ReactNode; checked?: boolean; sub?: boolean; active?: boolean };

const menuEntries: MenuEntry[] = [
  { label: "新規注文 (N)", keys: "F9", icon: <OrderIcon className="size-4" /> },
  { label: "チャート表示 (C)", icon: <NewChartIcon /> },
  {
    label: "ティックチャート (T)",
    keys: "Space",
    icon: (
      <Icon className="size-4">
        <rect x="1.500" y="3.500" width="15" height="11" fill="#fff" stroke="#999" />
        <path d="M3.500 12l2.500-3 2 2 3-4 1 3 3-4" stroke="#2a8f38" fill="none" strokeWidth="1.200" />
      </Icon>
    ),
  },
  {
    label: "板注文画面 (D)",
    keys: "Alt+B",
    icon: (
      <Icon className="size-[17px]">
        <rect x="1" y="2" width="16" height="14" fill="#fff" stroke="#3c74b4" />
        <path d="M1 3.500h16" stroke="#3f86dd" strokeWidth="3" />
        <path d="M2 6h7v9.500H2z" fill="#d7efc0" />
        <path d="M9 6h7.500v9.500H9z" fill="#f8cfae" />
        <path d="M3 8h5M3 11h5M3 14h5M10.500 8h5M10.500 11h5M10.500 14h5" stroke="#345" strokeWidth="1.200" strokeDasharray="2 1" />
      </Icon>
    ),
  },
  {
    label: "仕様 (p)",
    icon: (
      <Icon className="size-[17px]">
        <rect x="1.500" y="1.500" width="15" height="15" rx="3" fill="#f6cf4e" stroke="#b98a14" />
        <text x="9" y="13.500" textAnchor="middle" className="fill-[#8a6206] text-[12px] font-bold">$</text>
      </Icon>
    ),
  },
  "sep",
  { label: "非表示 (i)", keys: "Delete" },
  { label: "すべて非表示 (H)" },
  { label: "すべて表示 (S)" },
  { label: "通貨ペア (y)", keys: "Ctrl+U", active: true },
  { label: "セット", sub: true },
  "sep",
  { label: "スプレッド (r)" },
  { label: "高値/安値 (L)" },
  { label: "時間 (m)" },
  { label: "自動整列 (A)", checked: true },
  { label: "グリッド (G)", checked: true },
  "sep",
  {
    label: "気配値ポップアップ表示 (P)",
    keys: "F10",
    icon: (
      <Icon className="size-[17px]">
        <rect x="1" y="2" width="16" height="14" fill="#000" stroke="#3c74b4" />
        <path d="M3 6.500h3M3 9.500h3M3 12.500h3M8 6.500h3M8 9.500h3M8 12.500h3M13 6.500h2.500M13 9.500h2.500M13 12.500h2.500" stroke="#dfe9f5" strokeWidth="1.500" />
      </Icon>
    ),
  },
];

function ContextMenu() {
  return (
    <div
      role="menu"
      className="absolute left-[67px] top-[207px] w-[239px] border border-[#767676] bg-[linear-gradient(90deg,#f0f0f0_26px,#fff_26px)] py-[2px] text-[12px] shadow-[3px_3px_3px_rgba(0,0,0,0.35)]"
    >
      {menuEntries.map((entry, i) =>
        entry === "sep" ? (
          <div key={i} className="ml-[34px] mr-[3px] flex h-[9px] items-center">
            <span className="h-px w-full bg-[#e3e3e3]" />
          </div>
        ) : (
          <div key={i} className="relative">
            <button
              role="menuitem"
              className={`flex h-[23px] w-full items-center whitespace-nowrap pr-[13px] text-left ${
                entry.active ? "bg-[#bed3e8]" : ""
              }`}
            >
              <span className="flex w-[27px] justify-center">
                {entry.icon}
                {entry.checked && <Check className="size-[10px]" strokeWidth={4} />}
              </span>
              <span className="ml-[7px] flex-1">{entry.label}</span>
              {entry.keys}
              {entry.sub && <span className="-mr-1 size-0 border-y-3 border-l-3 border-y-transparent border-l-black" />}
            </button>
            {entry.active && (
              <>
                <span className="pointer-events-none absolute -inset-x-px -inset-y-[2px] border-3 border-[#ff0d00]" />
                <span className="absolute -top-2 left-[242px] flex size-[39px] items-center justify-center rounded-full bg-[#ff0d00] text-[25px] leading-none text-white">
                  10
                </span>
                <span className="absolute left-[123px] top-[3px]">
                  <PointerIcon light className="size-5" />
                </span>
              </>
            )}
          </div>
        ),
      )}
    </div>
  );
}

/* ─── Terminal ─── */

const terminalTabs: { label: string; badge?: string; width: string }[] = [
  { label: "運用比率", width: "w-[72px]" },
  { label: "口座履歴", width: "w-[72px]" },
  { label: "ニュース", badge: "99", width: "w-[72px]" },
  { label: "アラーム設定", width: "w-[87px]" },
  { label: "メールボックス", badge: "7", width: "w-[96px]" },
  { label: "マーケット", badge: "159", width: "w-[85px]" },
  { label: "記事", width: "w-[46px]" },
  { label: "ライブラリ", width: "w-[65px]" },
  { label: "エキスパート", width: "w-[82px]" },
  { label: "操作履歴", width: "w-[72px]" },
];

const columns = ["時間", "取引種別", "数量", "通貨ペア", "価格", "決済逆指値(S/L)", "決済指値(T/P)", "価格", "手数料", "スワップ", "損益"];

function Terminal() {
  return (
    <section className="flex border-t-2 border-white" aria-label="ターミナル">
      <div className="flex w-[15px] flex-col items-center pt-[3px]">
        <button aria-label="Close panel" className="h-3">
          <X className="size-[9px]" strokeWidth={4} />
        </button>
        <div className="mb-px mt-[2px] flex w-3 flex-1 items-center justify-start bg-linear-to-b from-[#d7e4f2] to-[#bfcddb] pb-[2px]">
          <h2 className="mt-auto rotate-180 text-[11px] leading-3 [text-orientation:sideways] [writing-mode:vertical-rl]">
            ターミナル
          </h2>
        </div>
      </div>
      <div className="mt-[2px] flex-1 border-l border-t border-[#a0a0a0] pb-1 pr-1">
        <div className="h-[105px] bg-white">
          <table className="w-full table-fixed border-separate border-spacing-0 text-[13px] leading-4">
            <colgroup>
              <col className="w-[142px]" />
              <col className="w-[196px]" />
              <col className="w-[98px]" />
              <col className="w-[76px]" />
              <col className="w-[98px]" />
              <col className="w-[109px]" />
              <col className="w-[109px]" />
              <col className="w-[109px]" />
              <col className="w-[109px]" />
              <col className="w-[109px]" />
              <col className="w-[109px]" />
              <col />
            </colgroup>
            <thead>
              <tr className="h-6">
                <th className="border-r border-[#e5e5e5] pl-[6px] text-left font-normal">
                  注文番号 <span className="ml-2 text-[10px] text-[#777]">/</span>
                </th>
                {columns.map((c, i) => (
                  <th key={i} className="whitespace-nowrap border-r border-[#e5e5e5] pr-[5px] text-right font-normal">
                    {c}
                  </th>
                ))}
              </tr>
            </thead>
            <tbody>
              <tr className="h-5 bg-[#c8c8c8] font-bold">
                <td colSpan={11} className="whitespace-pre pl-[6px]">
                  <span className="mr-2 inline-block size-2 rounded-full border border-[#888] bg-[linear-gradient(135deg,transparent_45%,#888_45%_55%,transparent_55%)]" />
                  残高: 100 000.00 <span className="font-medium">JPY</span>
                  {"   有効証拠金: 100 000.00  余剰証拠金: 100 000.00"}
                </td>
                <td className="pr-1 text-right text-[12px]">0.00</td>
              </tr>
            </tbody>
          </table>
        </div>
        <div className="flex h-5 border-t border-black text-[12px] leading-4 text-[#777]">
          <button className="-mt-px ml-[2px] w-[47px] border border-b-2 border-r-2 border-black border-t-white bg-white text-black">
            取引
          </button>
          {terminalTabs.map((tab) => (
            <button
              key={tab.label}
              className={`mb-[3px] mt-[2px] flex items-center justify-center whitespace-nowrap border-r border-[#777] ${tab.width}`}
            >
              {tab.label}
              {tab.badge && <sub className="bottom-0 mt-[6px] text-[9px] font-bold leading-none text-[#ff0000]">{tab.badge}</sub>}
            </button>
          ))}
        </div>
      </div>
    </section>
  );
}

function StatusBar() {
  return (
    <footer className="flex h-[24px] items-center border-t border-[#a0a0a0] text-[12px] shadow-[inset_0_1px_#fff]">
      <span className="flex-1 pl-[2px]">通貨ペアリストを表示t</span>
      <span className="flex h-[18px] w-[116px] items-center border-l border-[#a0a0a0] pl-[5px]">Default</span>
      <span className="h-[18px] w-[102px] border-l border-[#a0a0a0]" />
      <span className="h-[18px] w-[71px] border-l border-[#a0a0a0]" />
      <span className="h-[18px] w-[71px] border-l border-[#a0a0a0]" />
      <span className="h-[18px] w-[68px] border-l border-[#a0a0a0]" />
      <span className="h-[18px] w-[70px] border-l border-[#a0a0a0]" />
      <span className="h-[18px] w-[66px] border-l border-[#a0a0a0]" />
      <span className="flex h-[18px] w-[134px] items-center gap-1 border-l border-[#a0a0a0] pl-[5px]">
        <svg viewBox="0 0 24 14" className="h-[14px] w-6" aria-hidden>
          {Array.from({ length: 8 }, (_, i) => (
            <g key={i}>
              <rect x={i * 3} y="0" width="2" height="14" fill="#5f7a12" />
              <rect x={i * 3} y={10 - i} width="2" height={4 + i} fill="#11406e" />
              <rect x={i * 3} y={9 - i} width="2" height="1" fill="#f0f0f0" />
            </g>
          ))}
        </svg>
        2922/10 kb
      </span>
      <svg viewBox="0 0 16 16" className="-ml-px size-4 self-end" aria-hidden>
        <path d="M2 16L16 2M7 16l9-9M12 16l4-4" stroke="#999" />
      </svg>
    </footer>
  );
}

export default function App() {
  return (
    <div className="relative flex min-h-screen flex-col overflow-hidden rounded-t-lg border border-[#a8a8b0] bg-[#f0f0f0] font-[Open_Sans,Noto_Sans_CJK_JP,sans-serif] text-black [font-feature-settings:'palt']">
      <header className="flex h-[30px] items-center bg-white pl-2 text-[12px]">
        <span className="flex size-4 items-center justify-center bg-black text-[10px] font-bold italic leading-none text-white">
          <span className="text-[#e01b1b]">H</span>F
        </span>
        <span className="ml-[3px] h-[14px] w-[54px] bg-[conic-gradient(#bbb_25%,#fff_0_50%,#bbb_0_75%,#fff_0)] bg-[length:2px_2px]" />
        <h1 className="ml-[2px] flex-1 whitespace-pre">
          {"HFMarketsSV-Live Server 6 - ライブ口座- HF Markets (SV) Ltd.  USDJPY,H1"}
        </h1>
        <button aria-label="Minimize" className="flex w-[46px] justify-center">
          <Minus className="size-[14px]" strokeWidth={2} />
        </button>
        <button aria-label="Maximize" className="flex w-[46px] justify-center">
          <Square className="size-3" strokeWidth={2} />
        </button>
        <button aria-label="Close" className="flex w-[46px] justify-center">
          <X className="size-[16px]" strokeWidth={2} />
        </button>
      </header>

      <nav className="flex h-5 items-center gap-[17px] pl-[7px] text-[12px]">
        {["ファイル (F)", "表示 (V)", "挿入(I)", "チャート (C)", "ツール (T)", "ウィンドウ (W)", "ヘルプ (H)"].map((m) => (
          <button key={m}>{m}</button>
        ))}
      </nav>

      <div className="flex border-t border-[#a0a0a0] pt-px shadow-[inset_0_1px_#fff]">
        <div className="flex flex-1 flex-col">
          <MainToolbar />
          <DrawToolbar />
        </div>
        <div className="flex items-start gap-[11px] pr-[6px] pt-[2px]">
          <button aria-label="Search" className="pt-[2px]">
            <Icon className="size-4">
              <path d="M8 10l-6 6" stroke="#1d5fb4" strokeWidth="3" />
              <circle cx="11" cy="6.500" r="4.500" fill="#eef7ff" stroke="#2f77cf" strokeWidth="1.500" />
            </Icon>
          </button>
          <button aria-label="Notifications" className="relative flex size-[22px] items-end">
            <Icon className="size-4">
              <path d="M1 8c0-5 14-5 14 0s-6 5-8 5l-3 4v-4c-2-1-3-3-3-5z" fill="#e6e8ea" stroke="#a9adb2" />
            </Icon>
            <span className="absolute right-0 top-0 flex size-[17px] items-center justify-center rounded-full bg-[#e2361c] text-[12px] leading-none text-white">
              1
            </span>
          </button>
        </div>
      </div>

      <main className="flex border-b border-[#f8f8f8]">
        <aside className="flex w-[208px] shrink-0 flex-col">
          <MarketWatch />
          <Navigator />
        </aside>
        <div className="flex min-w-0 flex-1 flex-col">
          <div className="border-l-2 border-r border-t-2 border-l-[#808080] border-r-white border-t-[#808080] bg-[#ababab] pl-px pr-[6px] pt-px">
            <UsdJpyChart />
            <UsdChfChart />
          </div>
          <div className="border-t border-white">
            <div className="flex h-5 items-center border-t border-black text-[12px] text-[#777]">
              <button className="h-[14px] w-[90px] border-r border-[#777] pl-[6px] leading-[14px]">EURUSD,H4</button>
              <button className="h-[14px] w-[84px] border-r border-[#777] leading-[14px]">USDCHF,H4</button>
              <button className="h-[14px] w-[84px] leading-[14px]">GBPUSD,H4</button>
              <button className="-mt-px h-5 w-[80px] border border-b-2 border-r-2 border-black border-t-white bg-white text-black">
                USDJPY,H1
              </button>
              <span className="ml-auto flex gap-[15px] pr-[9px]">
                <span className="size-0 border-y-3 border-r-3 border-y-transparent border-r-[#999]" />
                <span className="size-0 border-y-3 border-l-3 border-y-transparent border-l-[#999]" />
              </span>
            </div>
          </div>
        </div>
      </main>

      <Terminal />
      <div className="min-h-0 flex-1" />
      <StatusBar />
      <ContextMenu />
    </div>
  );
}
